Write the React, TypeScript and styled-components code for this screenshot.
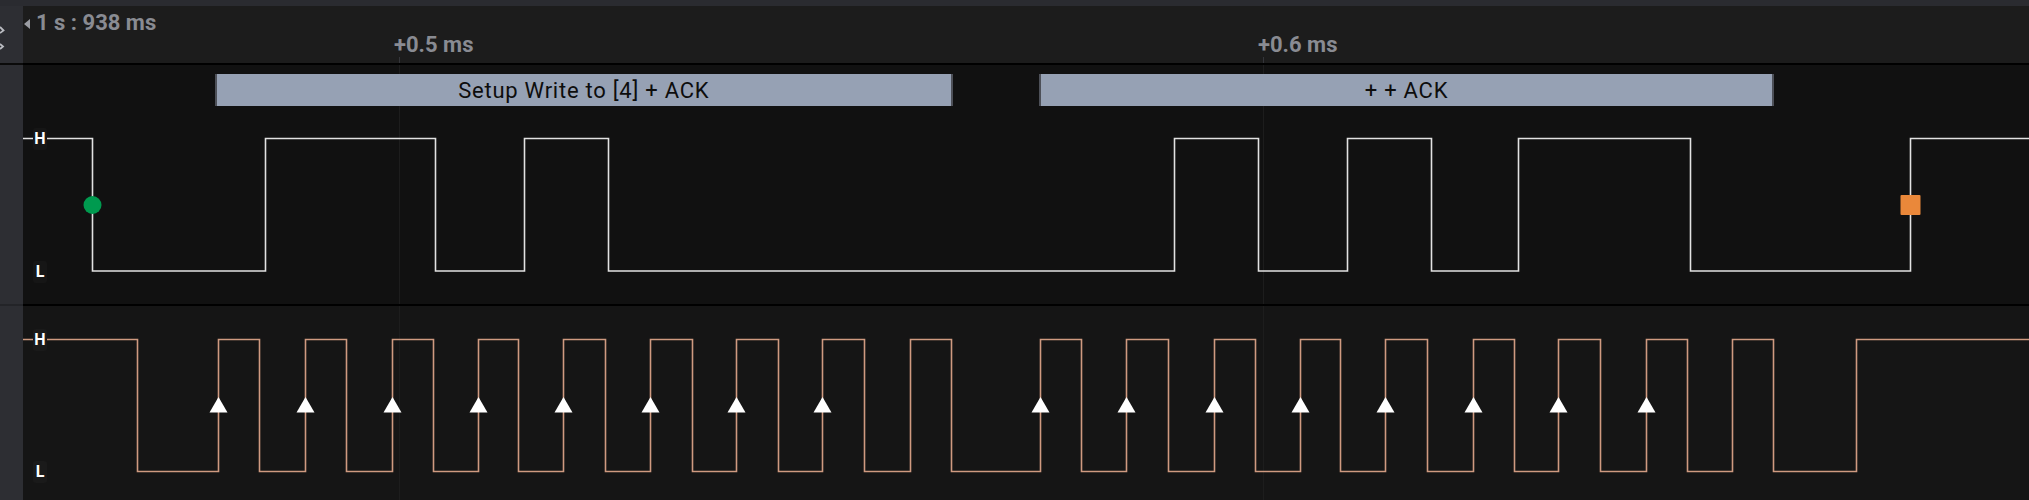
import React from "react";
import styled, { createGlobalStyle } from "styled-components";

const GlobalStyle = createGlobalStyle`
  html, body {
    margin: 0;
    padding: 0;
    background: #111111;
  }
  body {
    width: 2029px;
    height: 500px;
    overflow: hidden;
    font-family: Roboto, "Liberation Sans", sans-serif;
  }
`;

const PAGE_W = 2029;
const SIDEBAR_W = 23;
const CANVAS_W = PAGE_W - SIDEBAR_W;

/* page x -> canvas x */
const cx = (x: number) => x - SIDEBAR_W;

/* time axis: +0.5 ms at x=399, +0.6 ms at x=1263 */
const TICKS = [
  { label: "+0.5 ms", x: 399 },
  { label: "+0.6 ms", x: 1263 },
];

const Page = styled.div`
  display: flex;
  flex-direction: column;
  width: ${PAGE_W}px;
  height: 500px;
  background: #111111;
`;

const TopStrip = styled.div`
  flex: none;
  height: 6px;
  background: #2a2b30;
`;

const Band = styled.div<{ $h: number }>`
  flex: none;
  display: flex;
  height: ${(p) => p.$h}px;
`;

const Sidebar = styled.div`
  flex: none;
  width: ${SIDEBAR_W}px;
  background: #2d2e33;
  position: relative;
  overflow: hidden;
`;

const HeaderMain = styled.div`
  flex: 1;
  position: relative;
  background: #1c1c1c;
  display: flex;
  align-items: flex-start;
`;

const StartTime = styled.div`
  display: flex;
  align-items: center;
  gap: 6px;
  padding: 6px 0 0 1px;
  color: #898b92;
  font-weight: 700;
  font-size: 22px;
  line-height: 22px;
`;

const BackArrow = styled.span`
  width: 0;
  height: 0;
  border-top: 5px solid transparent;
  border-bottom: 5px solid transparent;
  border-right: 6px solid #9a9ca3;
  margin-top: 1px;
`;

const TickLabel = styled.div`
  position: absolute;
  top: 28px;
  color: #898b92;
  font-weight: 700;
  font-size: 22px;
  line-height: 22px;
  white-space: nowrap;
`;

const TickStub = styled.div`
  position: absolute;
  top: 51px;
  width: 1px;
  height: 6px;
  background: #34353a;
`;

const Divider = styled.div<{ $h: number; $side: string; $main: string }>`
  flex: none;
  display: flex;
  height: ${(p) => p.$h}px;
  background: ${(p) => p.$main};
  &::before {
    content: "";
    width: ${SIDEBAR_W}px;
    background: ${(p) => p.$side};
  }
`;

const ChannelCanvas = styled.div<{ $bg: string }>`
  flex: 1;
  position: relative;
  background: ${(p) => p.$bg};
  overflow: hidden;
`;

const WaveSvg = styled.svg`
  position: absolute;
  inset: 0;
  display: block;
`;

const LevelTag = styled.div<{ $y: number; $bg: string }>`
  position: absolute;
  left: 10px;
  top: ${(p) => p.$y - 11}px;
  width: 14px;
  height: 22px;
  border-radius: 3px;
  background: ${(p) => p.$bg};
  color: #ffffff;
  font-weight: 700;
  font-size: 16px;
  display: flex;
  align-items: center;
  justify-content: center;
`;

const Bubble = styled.div`
  position: absolute;
  top: 9px;
  height: 32px;
  box-sizing: border-box;
  background: #96a1b4;
  border-left: 2px solid #4d5058;
  border-right: 2px solid #4d5058;
  display: flex;
  align-items: center;
  justify-content: center;
  color: #0d0d0d;
  font-size: 22px;
  letter-spacing: 0.75px;
  font-weight: 400;
  white-space: nowrap;
`;

const CornerIcon = styled.svg`
  position: absolute;
  left: 0;
  top: 20px;
`;

/* ---------- waveform data (page x coordinates) ---------- */

const SDA_EDGES = [92, 264.5, 435, 524, 608, 1173.5, 1257.5, 1346.5, 1431, 1518, 1690, 1910];

const SCL_EDGES = [
  136.6, 218.3, 259.4, 304.5, 345.5, 391.5, 432.6, 477.7, 518.3, 563.4, 605.4, 650.4, 691.5,
  736.2, 777.7, 822.4, 864.4, 909.5, 950.5, 1040.3, 1081.3, 1126.4, 1168.4, 1213.5, 1254.6,
  1299.6, 1340.3, 1385.4, 1427.3, 1472.5, 1513.7, 1558.3, 1599.7, 1645.8, 1686.8, 1731.8,
  1772.8, 1855.5,
];

const SCL_SAMPLES = [
  218.3, 304.5, 391.5, 477.7, 563.4, 650.4, 736.2, 822.4, 1040.3, 1126.4, 1213.5, 1299.6,
  1385.4, 1472.5, 1558.3, 1645.8,
];

const BUBBLES = [
  { x1: 215, x2: 952.5, text: "Setup Write to [4] + ACK" },
  { x1: 1038.7, x2: 1774.3, text: "+ + ACK" },
];

function wavePath(edges: number[], hi: number, lo: number) {
  let y = hi;
  let d = `M0 ${y}`;
  for (const e of edges) {
    const x = Math.round(cx(e)) + 0.5;
    d += ` H${x}`;
    y = y === hi ? lo : hi;
    d += ` V${y}`;
  }
  d += ` H${CANVAS_W}`;
  return d;
}

function TickLines({ height, color }: { height: number; color: string }) {
  return (
    <>
      {TICKS.map((t) => (
        <line
          key={t.label}
          x1={cx(t.x) + 0.5}
          x2={cx(t.x) + 0.5}
          y1={0}
          y2={height}
          stroke={color}
          strokeWidth={1}
        />
      ))}
    </>
  );
}

const SDA_H = 239;
const SCL_H = 194;

export default function App() {
  return (
    <>
      <GlobalStyle />
      <Page>
        <TopStrip />
        <Band $h={57}>
          <Sidebar>
            <CornerIcon width="6" height="28" viewBox="0 0 6 28">
              <path d="M0 1 L3.5 4.5 L0 7" fill="none" stroke="#b9bbc1" strokeWidth="1.8" />
              <path d="M0 18 L3 20.5 L0 23" fill="none" stroke="#b9bbc1" strokeWidth="1.8" />
            </CornerIcon>
          </Sidebar>
          <HeaderMain>
            <StartTime>
              <BackArrow />
              <span>1 s : 938 ms</span>
            </StartTime>
            {TICKS.map((t) => (
              <React.Fragment key={t.label}>
                <TickLabel style={{ left: cx(t.x) - 5 }}>{t.label}</TickLabel>
                <TickStub style={{ left: cx(t.x) }} />
              </React.Fragment>
            ))}
          </HeaderMain>
        </Band>
        <Divider $h={2} $side="#0a0a0a" $main="#000000" />
        <Band $h={SDA_H}>
          <Sidebar />
          <ChannelCanvas $bg="#111111">
            <WaveSvg width={CANVAS_W} height={SDA_H} viewBox={`0 0 ${CANVAS_W} ${SDA_H}`}>
              <TickLines height={SDA_H} color="#1d1d1d" />
              <path
                d={wavePath(SDA_EDGES, 73.5, 206)}
                fill="none"
                stroke="#e2e2e2"
                strokeWidth={1.6}
                strokeLinejoin="miter"
              />
              <circle cx={cx(92) + 0.5} cy={140} r={9} fill="#009a4f" />
              <rect x={cx(1910) - 9.5} y={130} width={20} height={20} rx={1} fill="#ea883a" />
            </WaveSvg>
            {BUBBLES.map((b) => (
              <Bubble key={b.text} style={{ left: cx(b.x1), width: b.x2 - b.x1 }}>
                {b.text}
              </Bubble>
            ))}
            <LevelTag $y={73.5} $bg="#161616">H</LevelTag>
            <LevelTag $y={206.5} $bg="#161616">L</LevelTag>
          </ChannelCanvas>
        </Band>
        <Divider $h={2} $side="#232428" $main="#000000" />
        <Band $h={SCL_H}>
          <Sidebar />
          <ChannelCanvas $bg="#151515">
            <WaveSvg width={CANVAS_W} height={SCL_H} viewBox={`0 0 ${CANVAS_W} ${SCL_H}`}>
              <TickLines height={SCL_H} color="#1d1d1d" />
              <path
                d={wavePath(SCL_EDGES, 33.5, 165.5)}
                fill="none"
                stroke="#cf9a80"
                strokeWidth={1.6}
              />
              {SCL_SAMPLES.map((x) => {
                const sx = Math.round(cx(x)) + 0.5;
                return (
                  <polygon
                    key={x}
                    points={`${sx},91 ${sx - 9},106.5 ${sx + 9},106.5`}
                    fill="#ffffff"
                  />
                );
              })}
            </WaveSvg>
            <LevelTag $y={33.5} $bg="#1a1a1a">H</LevelTag>
            <LevelTag $y={165.5} $bg="#1a1a1a">L</LevelTag>
          </ChannelCanvas>
        </Band>
      </Page>
    </>
  );
}
